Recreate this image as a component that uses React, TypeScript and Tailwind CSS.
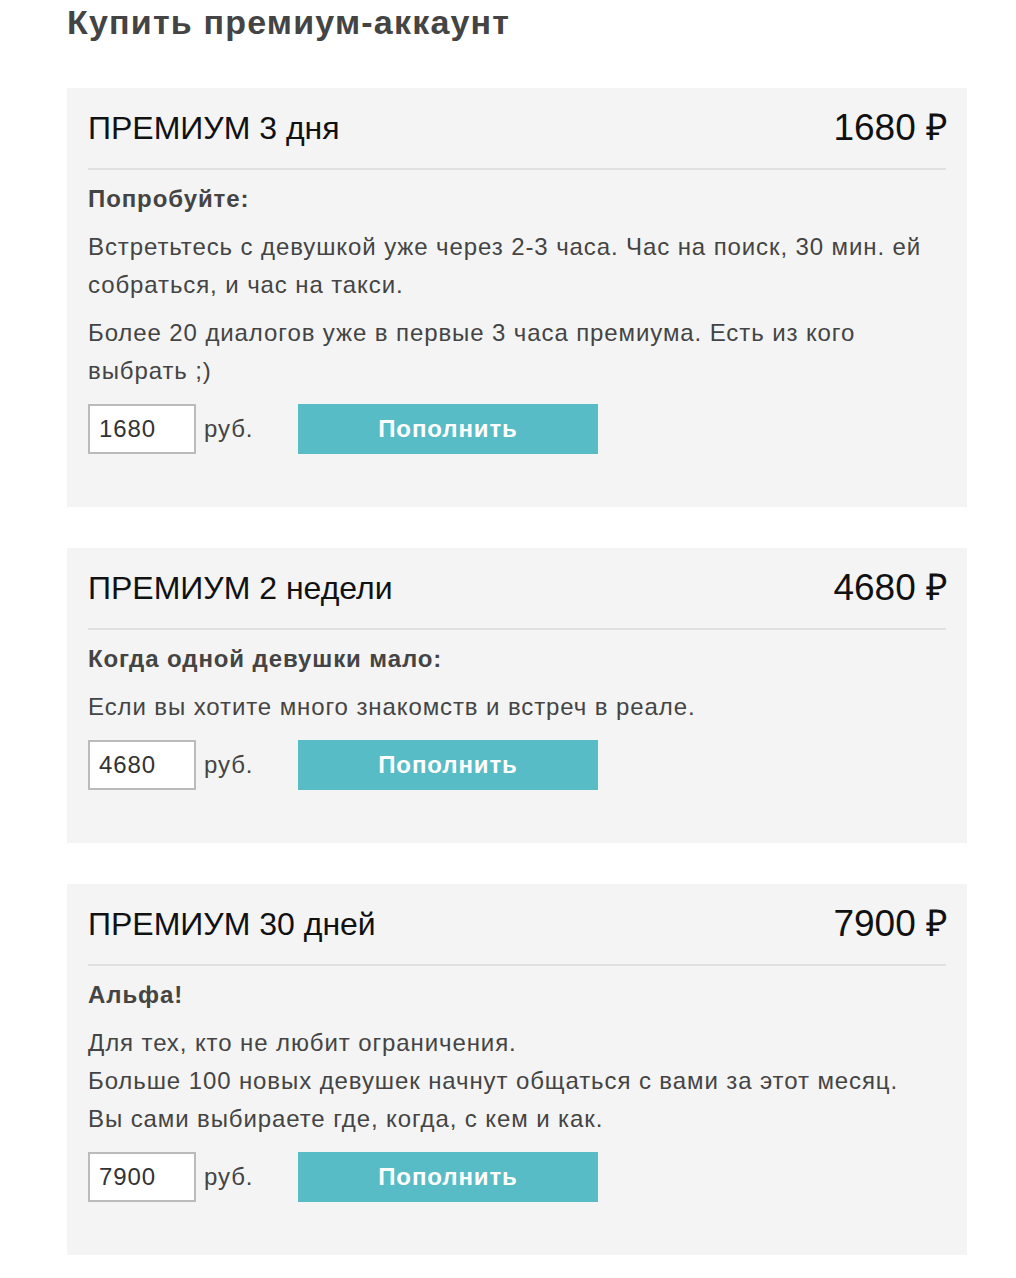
import React from 'react';

type Plan = {
  title: string;
  price: string;
  heading: string;
  paragraphs: string[][];
};

const PLANS: Plan[] = [
  {
    title: 'ПРЕМИУМ 3 дня',
    price: '1680',
    heading: 'Попробуйте:',
    paragraphs: [
      ['Встретьтесь с девушкой уже через 2-3 часа. Час на поиск, 30 мин. ей собраться, и час на такси.'],
      ['Более 20 диалогов уже в первые 3 часа премиума. Есть из кого выбрать ;)'],
    ],
  },
  {
    title: 'ПРЕМИУМ 2 недели',
    price: '4680',
    heading: 'Когда одной девушки мало:',
    paragraphs: [['Если вы хотите много знакомств и встреч в реале.']],
  },
  {
    title: 'ПРЕМИУМ 30 дней',
    price: '7900',
    heading: 'Альфа!',
    paragraphs: [
      [
        'Для тех, кто не любит ограничения.',
        'Больше 100 новых девушек начнут общаться с вами за этот месяц.',
        'Вы сами выбираете где, когда, с кем и как.',
      ],
    ],
  },
];

const PlanCard: React.FC<{ plan: Plan }> = ({ plan }) => (
  <div className="bg-[#f4f4f4] pt-[20px] pl-[21px] pr-[21px] pb-[53px]">
    {/* Header */}
    <div className="h-[40px] flex items-center justify-between text-[#111]">
      <span className="text-[32px] leading-[40px]">{plan.title}</span>
      <span className="text-[37px] leading-[40px] mr-[-2px]">{plan.price} ₽</span>
    </div>
    <div className="mt-[20px] h-[2px] bg-[#e0e0e0]" />

    <div className="mt-[10px] text-[24px] leading-[38px] tracking-[0.9px] text-[#444]">
      <p className="font-bold">{plan.heading}</p>
      {plan.paragraphs.map((lines, i) => (
        <p key={i} className="mt-[10px]">
          {lines.map((line, j) => (
            <React.Fragment key={j}>
              {j > 0 && <br />}
              {line}
            </React.Fragment>
          ))}
        </p>
      ))}

      {/* Top-up form */}
      <div className="mt-[14px] flex items-center h-[50px]">
        <input
          type="text"
          defaultValue={plan.price}
          className="w-[108px] h-[50px] bg-white border-2 border-[#bbb] pl-[9px] text-[24px] tracking-[0.9px] text-[#333] outline-none"
        />
        <span className="w-[102px] pl-[8px] text-[#444]">руб.</span>
        <button className="w-[300px] h-[50px] bg-[#57bcc6] text-white font-bold text-[24px] tracking-[0.9px]">
          Пополнить
        </button>
      </div>
    </div>
  </div>
);

export default function App() {
  return (
    <div className="min-h-screen bg-white font-['Liberation_Sans',Arial,sans-serif]">
      <div className="w-[900px] ml-[67px] pb-[23px]">
        <h1 className="text-[34px] leading-[44px] font-bold tracking-[1.2px] text-[#444]">Купить премиум-аккаунт</h1>
        <div className="mt-[44px] flex flex-col gap-[41px]">
          {PLANS.map((plan) => (
            <PlanCard key={plan.title} plan={plan} />
          ))}
        </div>
      </div>
    </div>
  );
}
